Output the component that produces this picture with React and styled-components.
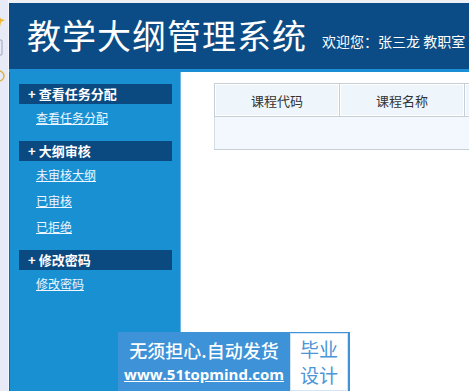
import React from 'react';
import styled, { createGlobalStyle } from 'styled-components';

const menu = [
  { title: '查看任务分配', links: ['查看任务分配'] },
  { title: '大纲审核', links: ['未审核大纲', '已审核', '已拒绝'] },
  { title: '修改密码', links: ['修改密码'] },
];

const columns = ['课程代码', '课程名称', ''];

export default function App() {
  return (
    <Page>
      <GlobalStyle />
      <Strip>
        <svg width="9" height="100" viewBox="0 0 9 100">
          <path d="M-2 14 L1 19 L5 20 L1 22 L0 27 L-3 22 Z" fill="#f0b429" />
          <rect x="-6" y="40" width="8" height="15" rx="1" fill="none" stroke="#9aa3b5" strokeWidth="1" />
          <circle cx="-1" cy="76" r="5" fill="none" stroke="#d9b44a" strokeWidth="1.5" />
        </svg>
      </Strip>
      <Frame>
        <TopGap />
        <Header>
          <Title>教学大纲管理系统</Title>
          <Welcome>欢迎您：张三龙 教职室</Welcome>
        </Header>
        <Body>
          <Sidebar>
            {menu.map((section) => (
              <Section key={section.title}>
                <SectionTitle>+ {section.title}</SectionTitle>
                {section.links.map((link) => (
                  <NavLink key={link} href="#">
                    {link}
                  </NavLink>
                ))}
              </Section>
            ))}
          </Sidebar>
          <Main>
            <Table>
              <thead>
                <tr>
                  {columns.map((c, i) => (
                    <Th key={i}>{c}</Th>
                  ))}
                </tr>
              </thead>
              <tbody>
                <tr>
                  {columns.map((c, i) => (
                    <Td key={i} />
                  ))}
                </tr>
              </tbody>
            </Table>
          </Main>
        </Body>
      </Frame>
      <Badge>
        <BadgeText>
          <BadgeLine>无须担心.自动发货</BadgeLine>
          <BadgeUrl>www.51topmind.com</BadgeUrl>
        </BadgeText>
        <BadgeTag>
          <span>毕业</span>
          <span>设计</span>
        </BadgeTag>
      </Badge>
    </Page>
  );
}

const GlobalStyle = createGlobalStyle`
  html, body {
    margin: 0;
    padding: 0;
    width: 469px;
    height: 391px;
    overflow: hidden;
    background: #ffffff;
    font-family: "Noto Sans CJK SC", "Liberation Sans", sans-serif;
  }
`;

const Page = styled.div`
  position: relative;
  display: flex;
  width: 469px;
  height: 391px;
  overflow: hidden;
`;

const Strip = styled.div`
  width: 8px;
  flex-shrink: 0;
  background: #e8eaf7;
  border-right: 1px solid #f6f7fc;
  overflow: hidden;
`;

const Frame = styled.div`
  flex: 1;
  display: flex;
  flex-direction: column;
  min-width: 0;
`;

const TopGap = styled.div`
  height: 3px;
  background: #eef0f5;
`;

const Header = styled.div`
  height: 69px;
  box-sizing: border-box;
  background: #0c4c86;
  border-bottom: 3px solid #1a8fd6;
  display: flex;
  align-items: flex-end;
  padding: 0 0 14px 18px;
  white-space: nowrap;
`;

const Title = styled.h1`
  margin: 0;
  font-size: 34px;
  font-weight: 400;
  letter-spacing: 1px;
  line-height: 40px;
  color: #ffffff;
`;

const Welcome = styled.span`
  margin-left: 15px;
  margin-bottom: 5px;
  font-size: 14px;
  line-height: 18px;
  color: #ffffff;
`;

const Body = styled.div`
  flex: 1;
  display: flex;
  min-height: 0;
`;

const Sidebar = styled.nav`
  width: 171px;
  flex-shrink: 0;
  background: #1890d2;
  border-left: 1px solid #0f6aa8;
  padding: 12px 8px 0 9px;
  box-sizing: border-box;
  display: flex;
  flex-direction: column;
  gap: 10px;
`;

const Section = styled.div`
  display: flex;
  flex-direction: column;
`;

const SectionTitle = styled.div`
  height: 20px;
  line-height: 20px;
  background: #0b4a80;
  color: #ffffff;
  font-size: 13px;
  font-weight: 700;
  padding-left: 9px;
  margin-bottom: 1px;
`;

const NavLink = styled.a`
  align-self: flex-start;
  margin-left: 17px;
  line-height: 26px;
  font-size: 12px;
  color: #eef7ff;
  text-decoration: underline;
`;

const Main = styled.main`
  flex: 1;
  background: #ffffff;
  border-left: 1px solid #6fb6e4;
  padding: 11px 0 0 33px;
  overflow: hidden;
`;

const Table = styled.table`
  border-collapse: collapse;
  width: 375px;
  table-layout: fixed;
`;

const Th = styled.th`
  width: 125px;
  height: 33px;
  padding: 0;
  box-sizing: border-box;
  border: 1px solid #c6ced6;
  box-shadow: inset 0 0 0 1px #ffffff;
  background: #eef6fb;
  font-size: 13px;
  font-weight: 400;
  color: #333333;
  text-align: center;
`;

const Td = styled.td`
  height: 33px;
  padding: 0;
  box-sizing: border-box;
  border-bottom: 1px solid #c6ced6;
  border-left: 1px solid #d6dde3;
  background: #f2f8fd;
  &:not(:first-child) {
    border-left: none;
  }
`;

const Badge = styled.div`
  position: absolute;
  left: 118px;
  top: 332px;
  width: 232px;
  height: 59px;
  display: flex;
  background: #3d92d8;
`;

const BadgeText = styled.div`
  flex: 1;
  display: flex;
  flex-direction: column;
  align-items: center;
  padding-top: 7px;
  color: #ffffff;
  white-space: nowrap;
`;

const BadgeLine = styled.span`
  font-size: 18px;
  line-height: 23px;
  font-weight: 500;
`;

const BadgeUrl = styled.span`
  font-family: "Open Sans", "Liberation Sans", sans-serif;
  font-size: 15px;
  line-height: 24px;
  font-weight: 700;
  text-decoration: underline;
`;

const BadgeTag = styled.div`
  width: 56px;
  margin: 1px 2px 0 0;
  background: #ffffff;
  border: 1px solid #d4e4f2;
  display: flex;
  flex-direction: column;
  align-items: center;
  justify-content: center;
  color: #4a96d6;
  font-size: 19px;
  line-height: 26px;
`;
